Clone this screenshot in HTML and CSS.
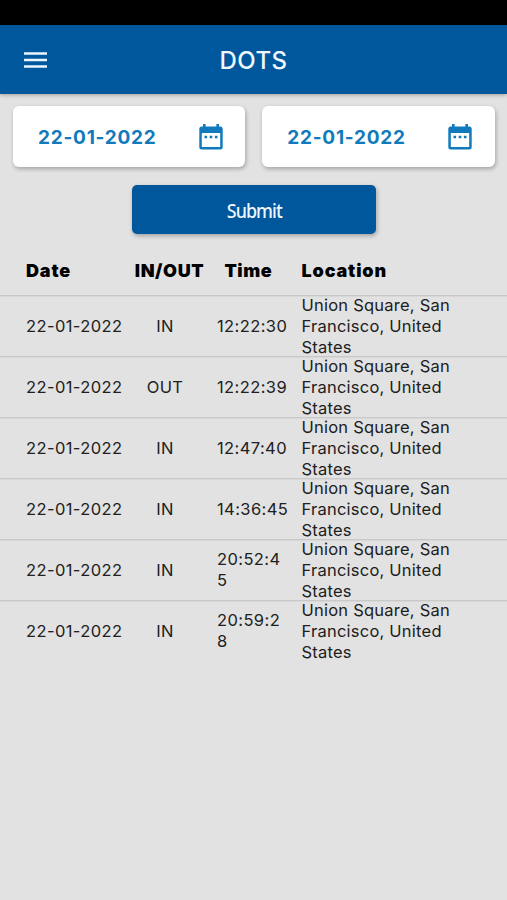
FILE: index.html
```html
<!DOCTYPE html>
<html lang="en">
<head>
<meta charset="utf-8">
<title>DOTS</title>
<link rel="stylesheet" href="styles.css">
</head>
<body>
<div class="status"></div>
<header class="bar">
  <svg class="menu" viewBox="0 0 23 16"><path d="M0 1.4h23M0 8h23M0 14.6h23" stroke="#e9f5ff" stroke-width="2.5"/></svg>
  <h1 class="title">DOTS</h1>
</header>
<main>
  <div class="dates">
    <div class="date"><span class="date-text">22-01-2022</span><svg class="cal" viewBox="0 0 24 26"><path fill-rule="evenodd" d="M4 0h2.6v2.5h10.8V0H20v2.5h1.2Q23.7 2.500 23.700 5v18q0 2.500-2.500 2.500H2.800Q.3 25.500 .3 23V5q0-2.500 2.500-2.500H4zM2.800 9v14h18.400V9z"/><path d="M5.500 11.700h2.600v2.600H5.500zM10.700 11.700h2.600v2.600h-2.600zM15.900 11.700h2.600v2.600h-2.600z"/></svg></div>
    <div class="date"><span class="date-text">22-01-2022</span><svg class="cal" viewBox="0 0 24 26"><path fill-rule="evenodd" d="M4 0h2.6v2.5h10.8V0H20v2.5h1.2Q23.7 2.500 23.700 5v18q0 2.500-2.500 2.500H2.800Q.3 25.500 .3 23V5q0-2.500 2.500-2.500H4zM2.800 9v14h18.400V9z"/><path d="M5.500 11.700h2.600v2.600H5.500zM10.700 11.700h2.600v2.600h-2.600zM15.900 11.700h2.600v2.600h-2.600z"/></svg></div>
  </div>
  <button class="submit"><span class="submit-text">Submit</span></button>
  <section class="table">
    <div class="row head"><span>Date</span><span class="mid">IN/OUT</span><span class="time">Time</span><span>Location</span></div>
    <div class="row"><span>22-01-2022</span><span class="mid">IN</span><span>12:22:30</span><span>Union Square, San<br>Francisco, United<br>States</span></div>
    <div class="row"><span>22-01-2022</span><span class="mid">OUT</span><span>12:22:39</span><span>Union Square, San<br>Francisco, United<br>States</span></div>
    <div class="row"><span>22-01-2022</span><span class="mid">IN</span><span>12:47:40</span><span>Union Square, San<br>Francisco, United<br>States</span></div>
    <div class="row"><span>22-01-2022</span><span class="mid">IN</span><span>14:36:45</span><span>Union Square, San<br>Francisco, United<br>States</span></div>
    <div class="row"><span>22-01-2022</span><span class="mid">IN</span><span>20:52:4<br>5</span><span>Union Square, San<br>Francisco, United<br>States</span></div>
    <div class="row"><span>22-01-2022</span><span class="mid">IN</span><span>20:59:2<br>8</span><span>Union Square, San<br>Francisco, United<br>States</span></div>
  </section>
</main>
</body>
</html>
```
FILE: styles.css
```css
* { box-sizing: border-box; }
body {
  margin: 0;
  height: 900px;
  overflow: hidden;
  background: #e2e2e2;
  font-family: Inter, "Liberation Sans", sans-serif;
  color: #202020;
}
.status { height: 25px; background: #000; }
.bar {
  height: 69px;
  padding: 0 24px;
  display: grid;
  grid-template-columns: 23px 1fr 23px;
  align-items: center;
  background: #00579b;
  box-shadow: 0 1px 4px rgba(0, 0, 0, .3);
}
.menu { width: 23px; height: 16px; }
.title {
  margin: 0;
  padding-top: 2px;
  text-align: center;
  font-size: 24px;
  font-weight: 500;
  letter-spacing: .4px;
  color: #eef8ff;
}
.dates { display: flex; gap: 17px; padding: 12px 12.5px 0 13px; }
.date {
  flex: 1;
  height: 61px;
  padding: 0 22.5px 0 25px;
  display: flex;
  align-items: center;
  justify-content: space-between;
  background: #fff;
  border-radius: 6px;
  box-shadow: 1px 2px 4px rgba(0, 0, 0, .28);
}
.date-text {
  padding-top: 1px;
  font-size: 19px;
  font-weight: 700;
  letter-spacing: .75px;
  color: #117abc;
  white-space: nowrap;
}
.cal { width: 24px; height: 26px; fill: #117abc; }
.submit {
  display: flex;
  align-items: center;
  justify-content: center;
  width: 244px;
  height: 49px;
  margin: 18px 0 0 132px;
  padding: 0;
  border: 0;
  border-radius: 5px;
  background: #00579b;
  box-shadow: 1px 2px 4px rgba(0, 0, 0, .28);
}
.submit-text {
  padding-top: 2px;
  font: 500 19px/24px "Noto Sans", sans-serif;
  letter-spacing: -1px;
  transform: scaleX(.94);
  color: #eef8ff;
}
.table { padding-top: 11px; }
.row {
  height: 61px;
  display: grid;
  grid-template-columns: 105px 68px 102.5px 1fr;
  padding: .6px 0 0 26px;
  align-items: center;
  align-content: center;
  border-top: 1px solid #c9c9c9;
  box-shadow: inset 0 1px #d8d8d8;
  font-size: 16.5px;
  line-height: 21px;
  letter-spacing: .4px;
  white-space: nowrap;
}
.mid { display: flex; justify-content: center; }
.row > :nth-child(3) { padding-left: 18px; }
.row > :nth-child(4) { letter-spacing: .23px; }
.row.head {
  height: 50px;
  padding: 0 0 0 26px;
  border: 0;
  box-shadow: none;
  font-size: 18px;
  font-weight: 900;
  letter-spacing: .85px;
  color: #000;
}
.row.head > :nth-child(4) { letter-spacing: .85px; }
.row.head > .mid { padding-left: 9px; letter-spacing: .6px; }
.row.head > .time { padding-left: 25.5px; letter-spacing: .5px; }
```
